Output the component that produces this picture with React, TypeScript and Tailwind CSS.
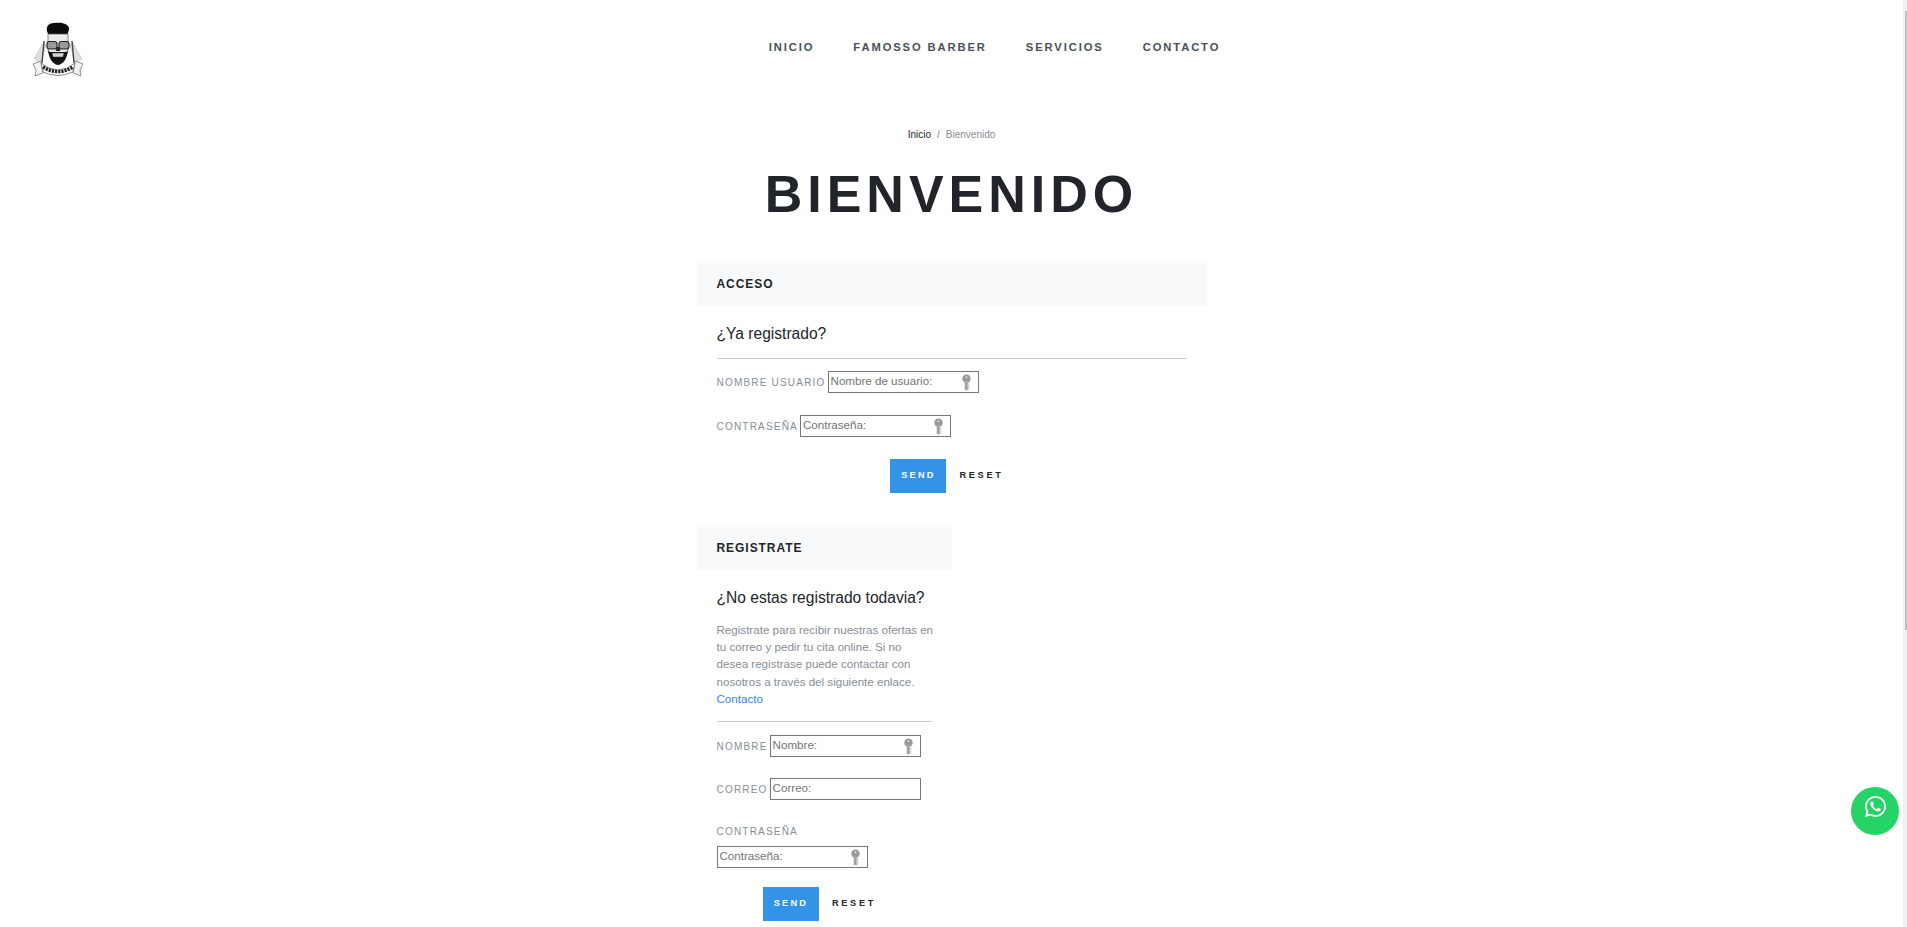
const font = "font-['Liberation_Sans',Arial,sans-serif]";

function Key() {
  return (
    <svg viewBox="0 0 12 18" className="absolute right-[6px] top-[2px] h-[17px] w-[11px]">
      <circle cx="6" cy="5" r="4.6" fill="#999" />
      <circle cx="6" cy="3.2" r="1" fill="#e4e4e4" />
      <rect x="4" y="8" width="4" height="9.4" fill="#b4b4b4" />
      <rect x="5" y="9" width="1" height="8" fill="#8c8c8c" />
      <rect x="8" y="11" width="1.4" height="1.6" fill="#c8c8c8" />
      <rect x="8" y="14" width="1.4" height="1.6" fill="#c8c8c8" />
    </svg>
  );
}

function Field({ label, placeholder, hasKey = true, stacked = false }: { label: string; placeholder: string; hasKey?: boolean; stacked?: boolean }) {
  return (
    <div className={stacked ? "mt-[3px] flex flex-col items-start gap-[7px]" : "flex items-center gap-[2px]"}>
      <span className="text-[10px] leading-[15px] tracking-[1.2px] text-[#868e96] uppercase">{label}</span>
      <div className="relative box-border h-[22px] w-[151px] border border-[#767676] bg-white px-[2px] text-[11.6px] leading-[18px] text-[#757575]">
        {placeholder}
        {hasKey && <Key />}
      </div>
    </div>
  );
}

function Buttons() {
  return (
    <div className="flex items-center justify-center gap-[13px] pr-[9px]">
      <span className="flex h-[34px] w-[56px] items-center justify-center bg-[#3393e6] pb-[1px] text-[9.2px] font-bold tracking-[2.2px] text-white">SEND</span>
      <span className="flex h-[34px] items-center pb-[1px] text-[9.2px] font-bold tracking-[2.7px] text-[#212529]">RESET</span>
    </div>
  );
}

function CardHead({ children }: { children: string }) {
  return (
    <div className="flex h-[43px] items-center bg-[#f8f9fa] px-[20px] pb-[2px] text-[12px] font-bold tracking-[0.95px] text-[#212529]">{children}</div>
  );
}

function Logo() {
  return (
    <svg viewBox="30 20 56 58" className="h-[58px] w-[56px] blur-[0.4px]">
      <path d="M34 58 L43 42 L46 44 L41 62Z M82 58 L73 42 L70 44 L75 62Z" fill="#dedede" stroke="#b4b4b4" strokeWidth="0.5" />
      <path d="M44 40 L42 62 M72 40 L74 62" stroke="#444" strokeWidth="1.4" />
      <path d="M48 33 C45 26 48 22 54 22 C60 21 68 22 69 27 C69 30 68 32 67 34 L49 34Z" fill="#0c0c0c" />
      <path d="M48 33 H68 V48 C68 54 64 56 58 56 C52 56 48 54 48 48Z" fill="#ececec" stroke="#555" strokeWidth="0.7" />
      <rect x="47" y="40.5" width="10" height="7.5" rx="2.5" fill="#9a9a9a" stroke="#222" strokeWidth="1.1" />
      <rect x="59" y="40.5" width="10" height="7.5" rx="2.5" fill="#9a9a9a" stroke="#222" strokeWidth="1.1" />
      <path d="M57 46 h2 l1.4 4 h-4.8Z" fill="#222" />
      <path d="M48 49 C49 57 52 63 58 64 C64 63 67 57 68 49 C67 51 66 51 64 51 H52 C50 51 49 51 48 49Z" fill="#111" />
      <path d="M52 52 H64 L63 56 H53Z" fill="#d4d4d4" stroke="#333" strokeWidth="0.5" />
      <path d="M33 63 L41 60 L43 72 L35 75 L36 69Z M83 63 L75 60 L73 72 L81 75 L80 69Z" fill="#f2f2f2" stroke="#777" strokeWidth="0.8" />
      <path d="M41 62 Q58 76 75 62 L73 71 Q58 78 43 71Z" fill="#f6f6f6" stroke="#444" strokeWidth="0.6" />
      <path d="M43 66 Q58 75 73 66" fill="none" stroke="#222" strokeWidth="3.6" strokeDasharray="2.2 1" />
    </svg>
  );
}

function WhatsApp() {
  return (
    <svg viewBox="0 0 24 24" className="h-[21px] w-[21px]" fill="#fff">
      <path d="M17.47 14.38c-.3-.15-1.76-.87-2.03-.97-.27-.1-.47-.15-.67.15-.2.3-.77.97-.94 1.16-.17.2-.35.22-.65.07-.3-.15-1.26-.46-2.39-1.47-.88-.79-1.48-1.76-1.65-2.06-.17-.3-.02-.46.13-.61.13-.13.3-.35.45-.52.15-.17.2-.3.3-.5.1-.2.05-.37-.03-.52-.07-.15-.67-1.61-.92-2.21-.24-.58-.49-.5-.67-.51h-.57c-.2 0-.52.07-.8.37-.27.3-1.04 1.02-1.04 2.48s1.07 2.88 1.22 3.07c.15.2 2.1 3.2 5.08 4.49.71.3 1.26.49 1.7.62.71.23 1.36.2 1.87.12.57-.08 1.76-.72 2-1.41.25-.7.25-1.29.18-1.41-.08-.13-.27-.2-.57-.35zM12.05 21.79h0a9.87 9.87 0 0 1-5.03-1.38l-.36-.21-3.74.98 1-3.65-.24-.37a9.86 9.86 0 0 1-1.51-5.26c0-5.45 4.44-9.88 9.89-9.88 2.64 0 5.12 1.03 6.99 2.9a9.83 9.83 0 0 1 2.89 6.99c0 5.45-4.44 9.88-9.89 9.88zM20.46 3.49A11.82 11.82 0 0 0 12.05 0C5.5 0 .16 5.34.16 11.89c0 2.1.55 4.14 1.59 5.95L.06 24l6.3-1.65a11.88 11.88 0 0 0 5.68 1.45h.01c6.55 0 11.89-5.34 11.89-11.9 0-3.17-1.24-6.16-3.48-8.41z" />
    </svg>
  );
}

export default function App() {
  return (
    <div className={`${font} relative h-[927px] w-full overflow-hidden bg-white pr-[4px]`}>
      <header className="flex h-[92px] items-center pl-[30px]">
        <div className="mt-[7px] w-[56px] shrink-0"><Logo /></div>
        <nav className="flex flex-1 justify-center gap-[39px] pt-[2px] text-[11.2px] font-bold tracking-[1.9px] text-[#495057]">
          <span>INICIO</span>
          <span>FAMOSSO BARBER</span>
          <span>SERVICIOS</span>
          <span>CONTACTO</span>
        </nav>
      </header>

      <div className="mt-[35px] flex justify-center gap-[6px] text-[10px] leading-[15px] text-[#868e96]">
        <span className="text-[#212529]">Inicio</span>
        <span>/</span>
        <span>Bienvenido</span>
      </div>

      <h1 className="mt-[19px] text-center text-[52px] leading-[67px] font-bold tracking-[5px] text-[#212529]">BIENVENIDO</h1>

      <main className="mx-auto mt-[35px] w-[510px]">
        <section>
          <CardHead>ACCESO</CardHead>
          <div className="px-[20px]">
            <h4 className="mt-[16px] text-[15.6px] leading-[24px] text-[#212529]">¿Ya registrado?</h4>
            <hr className="mt-[12px] border-0 border-t border-[#ccc]" />
            <div className="mt-[12px] flex flex-col gap-[22px]">
              <Field label="Nombre usuario" placeholder="Nombre de usuario:" />
              <Field label="Contraseña" placeholder="Contraseña:" />
            </div>
            <div className="mt-[22px]"><Buttons /></div>
          </div>
        </section>

        <section className="mt-[34px] w-[255px]">
          <CardHead>REGISTRATE</CardHead>
          <div className="px-[20px]">
            <h4 className="mt-[16px] text-[15.6px] leading-[24px] text-[#212529]">¿No estas registrado todavia?</h4>
            <p className="mt-[11px] text-[11.6px] leading-[17.2px] whitespace-nowrap text-[#868e96]">
              Registrate para recibir nuestras ofertas en<br />
              tu correo y pedir tu cita online. Si no<br />
              desea registrase puede contactar con<br />
              nosotros a través del siguiente enlace.<br />
              <span className="text-[#3483e8]">Contacto</span>
            </p>
            <hr className="mt-[14px] border-0 border-t border-[#ccc]" />
            <div className="mt-[13px] flex flex-col gap-[21px]">
              <Field label="Nombre" placeholder="Nombre:" />
              <Field label="Correo" placeholder="Correo:" hasKey={false} />
              <Field label="Contraseña" placeholder="Contraseña:" stacked />
            </div>
            <div className="mt-[19px]"><Buttons /></div>
          </div>
        </section>
      </main>

      <div className="absolute right-[8px] top-[787px] flex h-[48px] w-[48px] items-center justify-center rounded-full bg-[#25d366] pb-[9px]"><WhatsApp /></div>

      <div className="absolute top-0 right-0 h-full w-[4px] bg-[#f0f0f0]">
        <div className="ml-[2px] mt-[11px] h-[619px] w-[2px] bg-[#c0c0c0]" />
      </div>
    </div>
  );
}
